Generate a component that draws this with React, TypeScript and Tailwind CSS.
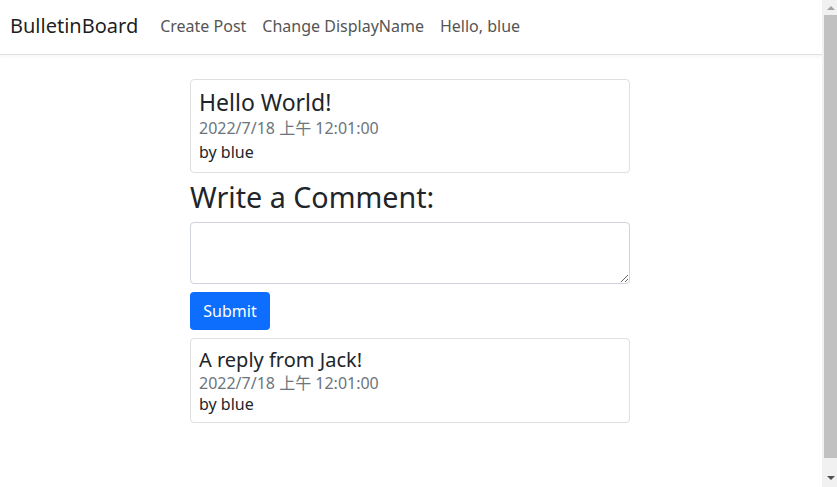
import React from "react"

const font = "font-['Segoe_UI','Noto_Sans','Noto_Sans_CJK_TC',sans-serif]"

const navLinks = ["Create Post", "Change DisplayName", "Hello, blue"]

function PostCard({ title, date, author, small }: { title: string; date: string; author: string; small?: boolean }) {
  return (
    <div className="rounded-[4px] border border-[#dfdfdf] bg-white p-2">
      <div className={small ? "text-[20px] leading-[26px] text-[#212529]" : "text-[23px] leading-[28px] text-[#212529]"}>
        {title}
      </div>
      <div className={`text-[16px] text-[#6c757d] ${small ? "leading-[21px]" : "leading-[25px]"}`}>{date}</div>
      <div className={`text-[16px] text-[#212529] ${small ? "leading-[20px]" : "leading-[23px]"}`}>by {author}</div>
    </div>
  )
}

function Scrollbar() {
  return (
    <div className="flex w-[15px] shrink-0 flex-col bg-[#f1f1f1]">
      <div className="flex h-[15px] items-center justify-center pl-[2px]">
        <svg width="8" height="5" viewBox="0 0 8 5">
          <path d="M0 5 L4 1 L8 5 Z" fill="#a3a3a3" />
        </svg>
      </div>
      <div className="ml-[2px] h-[443px] bg-[#c1c1c1]" />
      <div className="flex-1" />
      <div className="flex h-[17px] items-center justify-center pl-[2px]">
        <svg width="8" height="5" viewBox="0 0 8 5">
          <path d="M0 0 L4 4 L8 0 Z" fill="#505050" />
        </svg>
      </div>
    </div>
  )
}

export default function App() {
  return (
    <div className={`flex h-screen w-full overflow-hidden bg-white ${font}`}>
      <div className="min-w-0 flex-1">
        <nav className="flex h-[55px] items-center border-b border-[#dee2e6] bg-white pb-[2px] pl-[10px] shadow-[0_1px_4px_rgba(0,0,0,0.06)]">
          <span className="mr-[22px] text-[20px] text-black/90">BulletinBoard</span>
          <div className="flex items-center gap-4 text-[16px] text-[#555]">
            {navLinks.map((l) => (
              <span key={l}>{l}</span>
            ))}
          </div>
        </nav>

        <main className="ml-[190px] mt-6 w-[440px]">
          <PostCard title="Hello World!" date="2022/7/18 上午 12:01:00" author="blue" />
          <h2 className="mt-[7px] mb-2 text-[28.7px] leading-[34px] text-[#212529]">Write a Comment:</h2>
          <textarea
            rows={2}
            className="block h-[62px] w-full rounded-[4px] border border-[#ced4da] px-3 py-1.5 text-[16px] outline-none"
          />
          <button className="mt-2 h-[38px] w-[80px] rounded-[4px] bg-[#0d6efd] text-[16px] text-white">Submit</button>
          <div className="mt-2">
            <PostCard title="A reply from Jack!" date="2022/7/18 上午 12:01:00" author="blue" small />
          </div>
        </main>
      </div>
      <Scrollbar />
    </div>
  )
}
